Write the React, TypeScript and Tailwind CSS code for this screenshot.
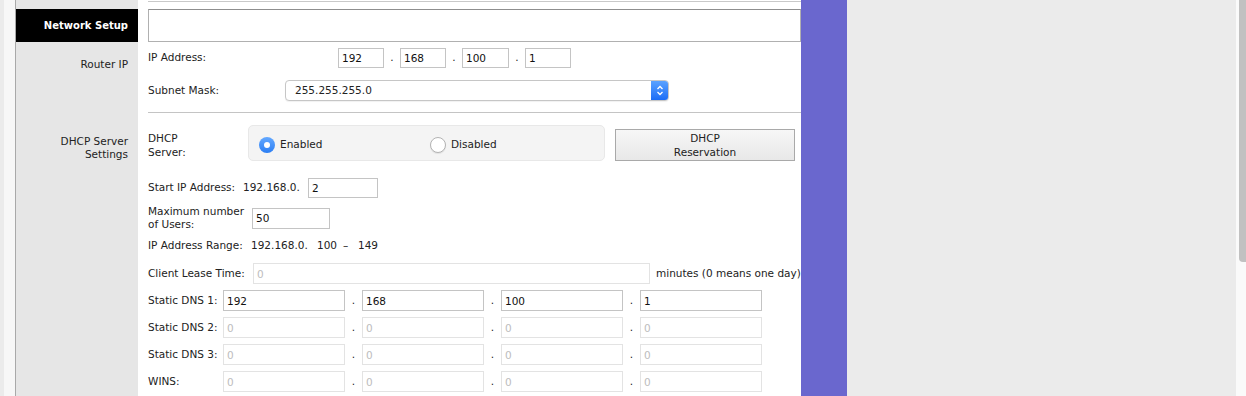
import React from 'react'

const cellIn = 'h-[21px] border bg-white px-[3px] outline-none'

function Field({ value, w, off }: { value: string; w: string; off?: boolean }) {
  return (
    <input
      readOnly
      value={off ? '' : value}
      placeholder={off ? value : undefined}
      className={`${cellIn} ${w} ${off ? 'border-[#e3e3e3] placeholder:text-[#bdbdbd]' : 'border-[#c4c4c4] text-[#111]'}`}
    />
  )
}

function Dot({ w }: { w: string }) {
  return <span className={`${w} text-center`}>.</span>
}

function DnsRow({ label, values, off }: { label: string; values: string[]; off?: boolean }) {
  return (
    <div className="mt-[6px] flex h-[21px] items-center">
      <span className="w-[75px]">{label}</span>
      {values.map((v, i) => (
        <React.Fragment key={i}>
          {i > 0 && <Dot w="w-[17px]" />}
          <Field value={v} w="w-[122px]" off={off} />
        </React.Fragment>
      ))}
    </div>
  )
}

export default function App() {
  return (
    <div className="flex h-[396px] w-[1246px] overflow-hidden bg-[#ebebeb] font-['DejaVu_Sans',sans-serif] text-[10.5px] text-[#222]">
      <div className="w-[4px] shrink-0" />
      <div className="w-[11px] shrink-0 bg-[#f7f7f7]" />
      <div className="w-[1px] shrink-0 bg-[#a9a9a9]" />

      <div className="flex w-[785px] shrink-0 flex-col">
        {/* top strip */}
        <div className="flex h-[9px]">
          <div className="w-[122px] bg-[#e6e6e6]" />
          <div className="flex-1 bg-white pl-[10px]">
            <div className="mt-[1px] h-[1px] bg-[#c9c9c9]" />
          </div>
        </div>

        {/* network setup */}
        <div className="flex h-[33px]">
          <div className="flex w-[122px] items-center justify-end bg-black pr-[10px] text-[10px] font-bold text-white">
            Network Setup
          </div>
          <div className="flex-1 bg-white pl-[10px]">
            <div className="h-[33px] border border-[#b0b0b0] border-t-[#8e8e8e]" />
          </div>
        </div>

        {/* router ip */}
        <div className="flex">
          <div className="w-[122px] bg-[#e6e6e6] pr-[10px] pt-[15px] text-right leading-[14px]">Router IP</div>
          <div className="flex-1 bg-white pl-[10px] pt-[6px]">
            <div className="flex h-[20px] items-center">
              <span className="w-[190px]">IP Address:</span>
              <Field value="192" w="w-[46px] !h-[20px]" />
              <Dot w="w-[16px]" />
              <Field value="168" w="w-[46px] !h-[20px]" />
              <Dot w="w-[16px]" />
              <Field value="100" w="w-[47px] !h-[20px]" />
              <Dot w="w-[16px]" />
              <Field value="1" w="w-[46px] !h-[20px]" />
            </div>
            <div className="mt-[12px] flex h-[21px] items-center">
              <span className="w-[137px]">Subnet Mask:</span>
              <div className="flex h-[21px] w-[384px] items-center overflow-hidden rounded-[4px] border border-[#c6c6c6] bg-white shadow-[0_1px_1px_rgba(0,0,0,0.06)]">
                <span className="pl-[9px]">255.255.255.0</span>
                <div className="ml-auto flex h-full w-[17px] items-center justify-center bg-gradient-to-b from-[#5aa2ff] to-[#1a6cf6]">
                  <svg width="8" height="13" viewBox="0 0 8 13" fill="none" stroke="white" strokeWidth="1.3">
                    <path d="M1.5 5 L4 2.5 L6.5 5" />
                    <path d="M1.5 8 L4 10.5 L6.5 8" />
                  </svg>
                </div>
              </div>
            </div>
            <div className="mt-[11px] h-[1px] bg-[#c4c4c4]" />
          </div>
        </div>

        {/* dhcp */}
        <div className="flex flex-1">
          <div className="w-[122px] bg-[#e6e6e6] pr-[10px] pt-[22px] text-right leading-[13px]">
            DHCP Server
            <br />
            Settings
          </div>
          <div className="flex-1 bg-white pl-[10px]">
            <div className="mt-[12px] flex items-start">
              <div className="w-[100px] pt-[6px] leading-[14px]">
                DHCP
                <br />
                Server:
              </div>
              <div className="flex h-[36px] w-[357px] items-center rounded-[5px] border border-[#e8e8e8] bg-[#f4f4f4] pl-[10px] pt-[4px]">
                <div className="flex w-[171px] items-center">
                  <div className="flex h-[16px] w-[16px] items-center justify-center rounded-full bg-gradient-to-b from-[#63a8ff] to-[#2b7ef3]">
                    <div className="h-[6px] w-[6px] rounded-full bg-white" />
                  </div>
                  <span className="ml-[5px]">Enabled</span>
                </div>
                <div className="flex items-center">
                  <div className="h-[16px] w-[16px] rounded-full border border-[#b3b3b3] bg-white shadow-[0_1px_1px_rgba(0,0,0,0.08)]" />
                  <span className="ml-[5px]">Disabled</span>
                </div>
              </div>
              <div className="ml-[10px] mt-[4px] flex h-[32px] w-[180px] flex-col items-center justify-center border border-[#a9a9a9] bg-gradient-to-b from-[#f7f7f7] to-[#e8e8e8] leading-[14px]">
                <span>DHCP</span>
                <span>Reservation</span>
              </div>
            </div>

            <div className="mt-[17px] flex h-[20px] items-center">
              <span className="w-[95px]">Start IP Address:</span>
              <span className="w-[65px]">192.168.0.</span>
              <Field value="2" w="w-[70px] !h-[20px]" />
            </div>

            <div className="mt-[7px] flex h-[26px] items-center">
              <span className="w-[104px] leading-[13px]">
                Maximum number
                <br />
                of Users:
              </span>
              <Field value="50" w="w-[78px]" />
            </div>

            <div className="mt-[8px] flex h-[14px] items-center">
              <span className="w-[103px]">IP Address Range:</span>
              <span className="w-[66px]">192.168.0.</span>
              <span className="w-[26px]">100</span>
              <span className="w-[15px]">–</span>
              <span>149</span>
            </div>

            <div className="mt-[10px] flex h-[21px] items-center">
              <span className="w-[105px]">Client Lease Time:</span>
              <Field value="0" w="w-[397px]" off />
              <span className="ml-[6px] whitespace-nowrap">minutes (0 means one day)</span>
            </div>

            <DnsRow label="Static DNS 1:" values={['192', '168', '100', '1']} />
            <DnsRow label="Static DNS 2:" values={['0', '0', '0', '0']} off />
            <DnsRow label="Static DNS 3:" values={['0', '0', '0', '0']} off />
            <DnsRow label="WINS:" values={['0', '0', '0', '0']} off />
          </div>
        </div>
      </div>

      <div className="w-[46px] shrink-0 bg-[#6a67ce]" />
      <div className="flex-1" />
      <div className="w-[10px] shrink-0 bg-[#fafafa]">
        <div className="ml-[3px] h-[262px] w-[7px] rounded-bl-[4px] bg-[#c1c1c1]" />
      </div>
    </div>
  )
}
